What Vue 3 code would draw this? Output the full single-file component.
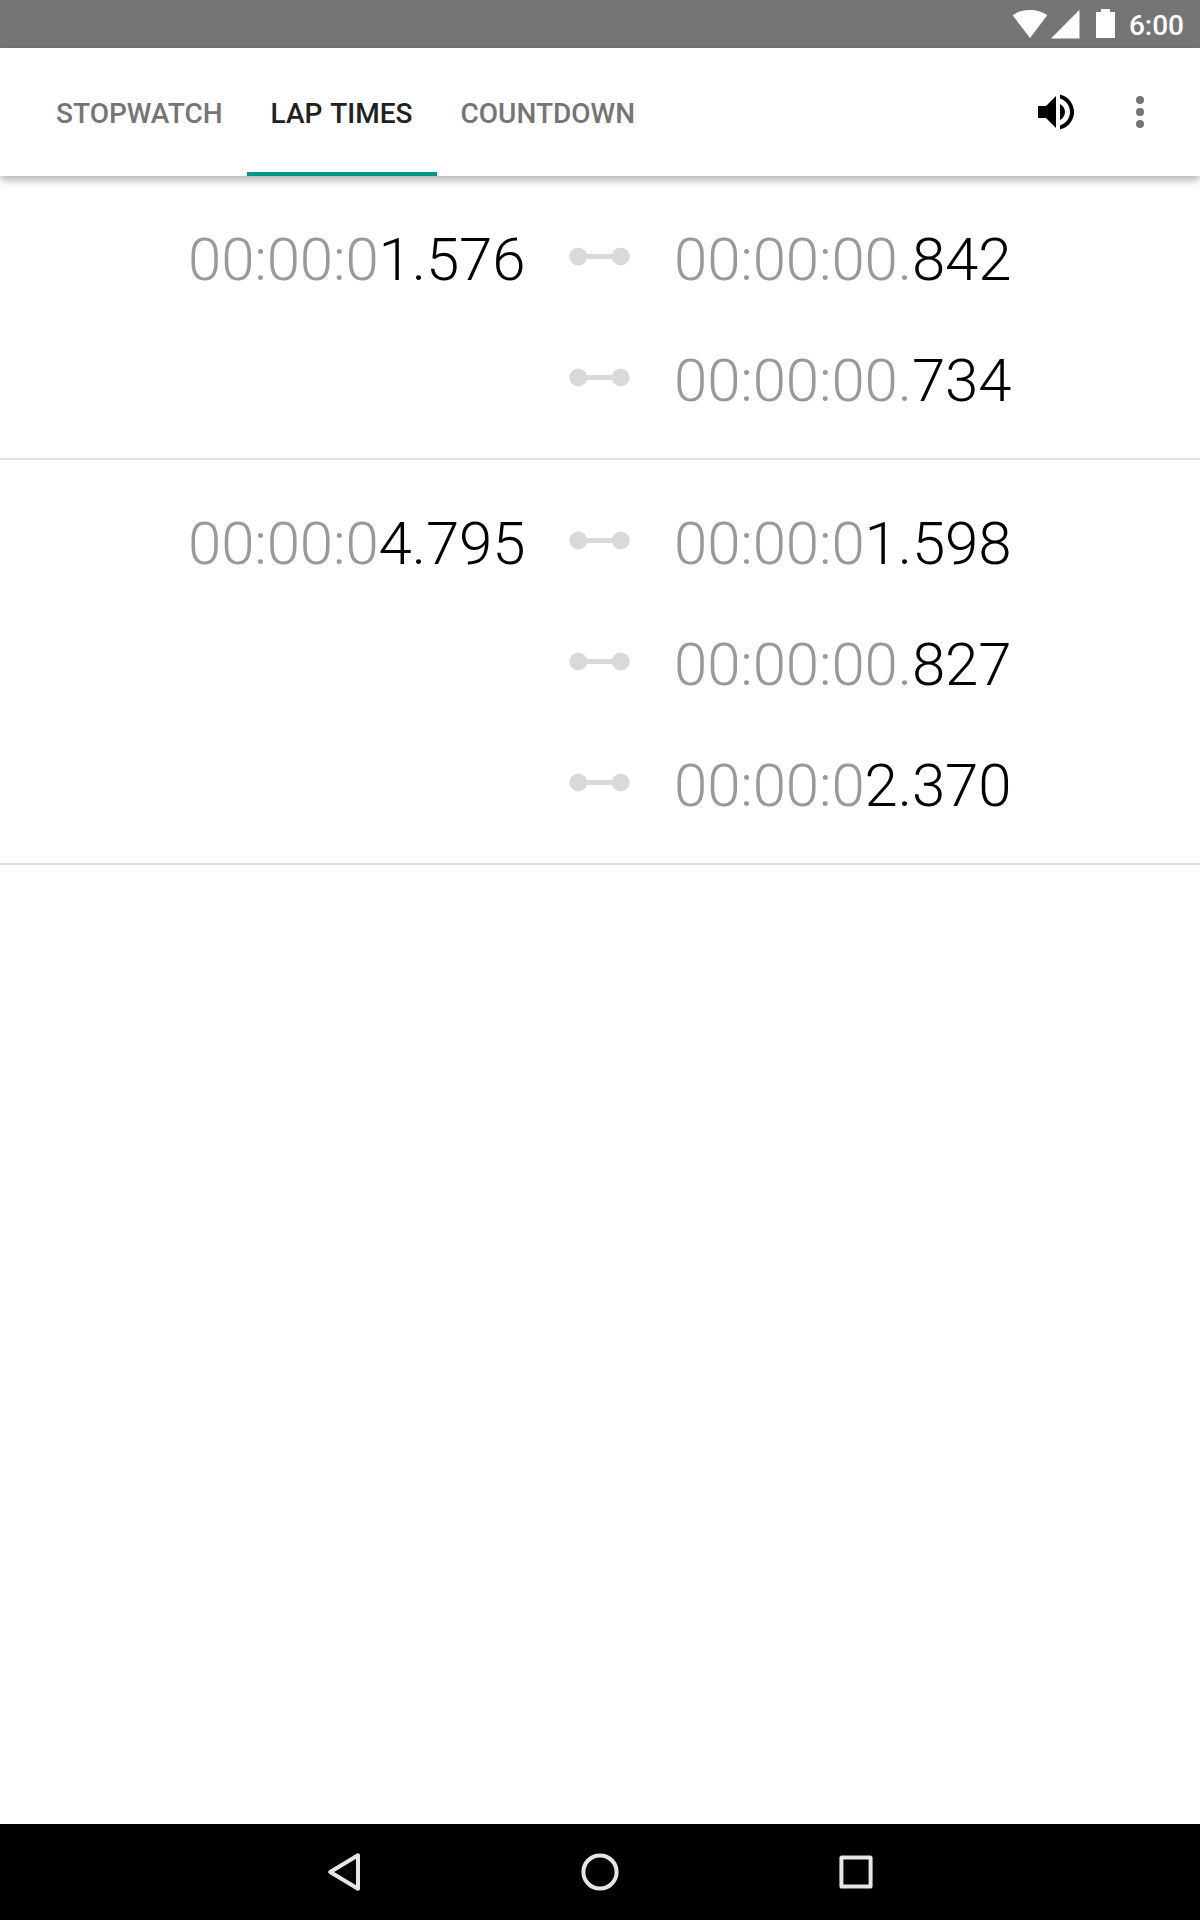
<script setup>
import { ref } from 'vue'

const tabs = ['Stopwatch', 'Lap times', 'Countdown']
const activeTab = ref('Lap times')

const sessions = [
  {
    total: '00:00:01.576',
    laps: ['00:00:00.842', '00:00:00.734']
  },
  {
    total: '00:00:04.795',
    laps: ['00:00:01.598', '00:00:00.827', '00:00:02.370']
  }
]

// leading zeros and separators are drawn dimmed
function dimPart(time) {
  return time.match(/^[0:.]*/)[0]
}

function mainPart(time) {
  return time.slice(dimPart(time).length)
}
</script>

<template>
  <div class="screen">
    <div class="status-bar">
      <svg class="wifi" width="36" height="30" viewBox="0 0 36 30">
        <path d="M18 29 L0.7 6.3 C5 2.8 11 0.9 18 0.9 S31 2.8 35.3 6.3 Z" fill="#fff" />
      </svg>
      <svg class="signal" width="29" height="30" viewBox="0 0 29 30">
        <path d="M28.5 0.8 V29.4 H0 Z" fill="#fff" />
      </svg>
      <svg class="battery" width="19" height="29" viewBox="0 0 19 29">
        <path d="M5 0 H14 V3 H19 V29 H0 V3 H5 Z" fill="#fff" />
      </svg>
      <span class="clock">6:00</span>
    </div>

    <header class="app-bar">
      <nav class="tabs">
        <button
          v-for="t in tabs"
          :key="t"
          class="tab"
          :class="{ active: t === activeTab }"
          @click="activeTab = t"
        >{{ t }}</button>
      </nav>
      <div class="actions">
        <svg width="48" height="48" viewBox="0 0 24 24" fill="#000">
          <path d="M3 9v6h4l5 5V4L7 9H3zm13.5 3c0-1.77-1.02-3.29-2.5-4.03v8.05c1.48-.73 2.5-2.25 2.5-4.02zM14 3.23v2.06c2.89.86 5 3.54 5 6.71s-2.11 5.85-5 6.71v2.06c4.01-.91 7-4.49 7-8.77s-2.99-7.86-7-8.77z" />
        </svg>
        <svg width="48" height="48" viewBox="0 0 24 24" fill="#757575">
          <circle cx="12" cy="6" r="2" />
          <circle cx="12" cy="12" r="2" />
          <circle cx="12" cy="18" r="2" />
        </svg>
      </div>
    </header>

    <main class="list">
      <section v-for="s in sessions" :key="s.total" class="session">
        <div v-for="(lap, i) in s.laps" :key="i" class="row">
          <div class="time">
            <template v-if="i === 0"><span class="dim">{{ dimPart(s.total) }}</span>{{ mainPart(s.total) }}</template>
          </div>
          <svg class="link" width="62" height="20" viewBox="0 0 62 20" fill="#d9d9d9">
            <circle cx="9.3" cy="9.5" r="9" />
            <circle cx="51.7" cy="9.5" r="9" />
            <rect x="9" y="7" width="42" height="5" />
          </svg>
          <div class="time"><span class="dim">{{ dimPart(lap) }}</span>{{ mainPart(lap) }}</div>
        </div>
      </section>
    </main>

    <footer class="nav-bar">
      <svg width="48" height="48" viewBox="0 0 48 48">
        <path d="M38 7.3 V40.7 L10.2 24 Z" />
      </svg>
      <svg width="48" height="48" viewBox="0 0 48 48">
        <circle cx="24" cy="24" r="16.6" />
      </svg>
      <svg width="48" height="48" viewBox="0 0 48 48">
        <rect x="9.4" y="9.4" width="29.2" height="29.2" rx="0.6" />
      </svg>
    </footer>
  </div>
</template>

<style>
body {
  margin: 0;
  background: #fff;
}
</style>

<style scoped>
.screen {
  width: 1200px;
  height: 1920px;
  display: flex;
  flex-direction: column;
  background: #fff;
  font-family: Roboto, sans-serif;
  overflow: hidden;
}

.status-bar {
  height: 48px;
  flex: none;
  display: flex;
  justify-content: flex-end;
  align-items: flex-start;
  padding-right: 16px;
  background: #757575;
  box-sizing: border-box;
}
.wifi {
  margin-top: 9px;
}
.signal {
  margin: 9px 0 0 3px;
}
.battery {
  margin: 9px 0 0 16px;
}
.clock {
  margin-left: 14px;
  color: #fff;
  font-size: 28px;
  font-weight: 500;
  line-height: 52px;
}

.app-bar {
  height: 128px;
  flex: none;
  display: flex;
  justify-content: space-between;
  background: #fff;
  box-shadow: 0 4px 8px rgba(0, 0, 0, 0.3);
  z-index: 1;
}
.tabs {
  display: flex;
  padding-left: 32px;
}
.tab {
  min-width: 190px;
  padding: 6px 24px 0;
  border: 0;
  border-bottom: 4px solid transparent;
  background: none;
  color: #757575;
  font: 500 28px Roboto, sans-serif;
  word-spacing: 1.5px;
  white-space: nowrap;
  text-transform: uppercase;
}
.tab.active {
  border-bottom-color: #009688;
  color: #212121;
}
.actions {
  display: flex;
  align-items: center;
  gap: 36px;
  padding-right: 36px;
}

.list {
  flex: 1;
}
.session {
  padding: 20px 0;
  border-bottom: 2px solid #e0e0e0;
}
.row {
  height: 121px;
  display: flex;
  align-items: center;
  justify-content: center;
  gap: 43px;
}
.time {
  width: 338px;
  padding-top: 6px;
  font-size: 60px;
  font-weight: 300;
  line-height: 70px;
  letter-spacing: -0.15px;
  white-space: nowrap;
  color: #000;
}
.dim {
  color: #999;
}
.link {
  flex: none;
}

.nav-bar {
  height: 96px;
  flex: none;
  display: flex;
  justify-content: center;
  align-items: center;
  gap: 208px;
  background: #000;
}
.nav-bar svg {
  fill: none;
  stroke: #e6e6e6;
  stroke-width: 4;
  stroke-linejoin: round;
}
</style>
